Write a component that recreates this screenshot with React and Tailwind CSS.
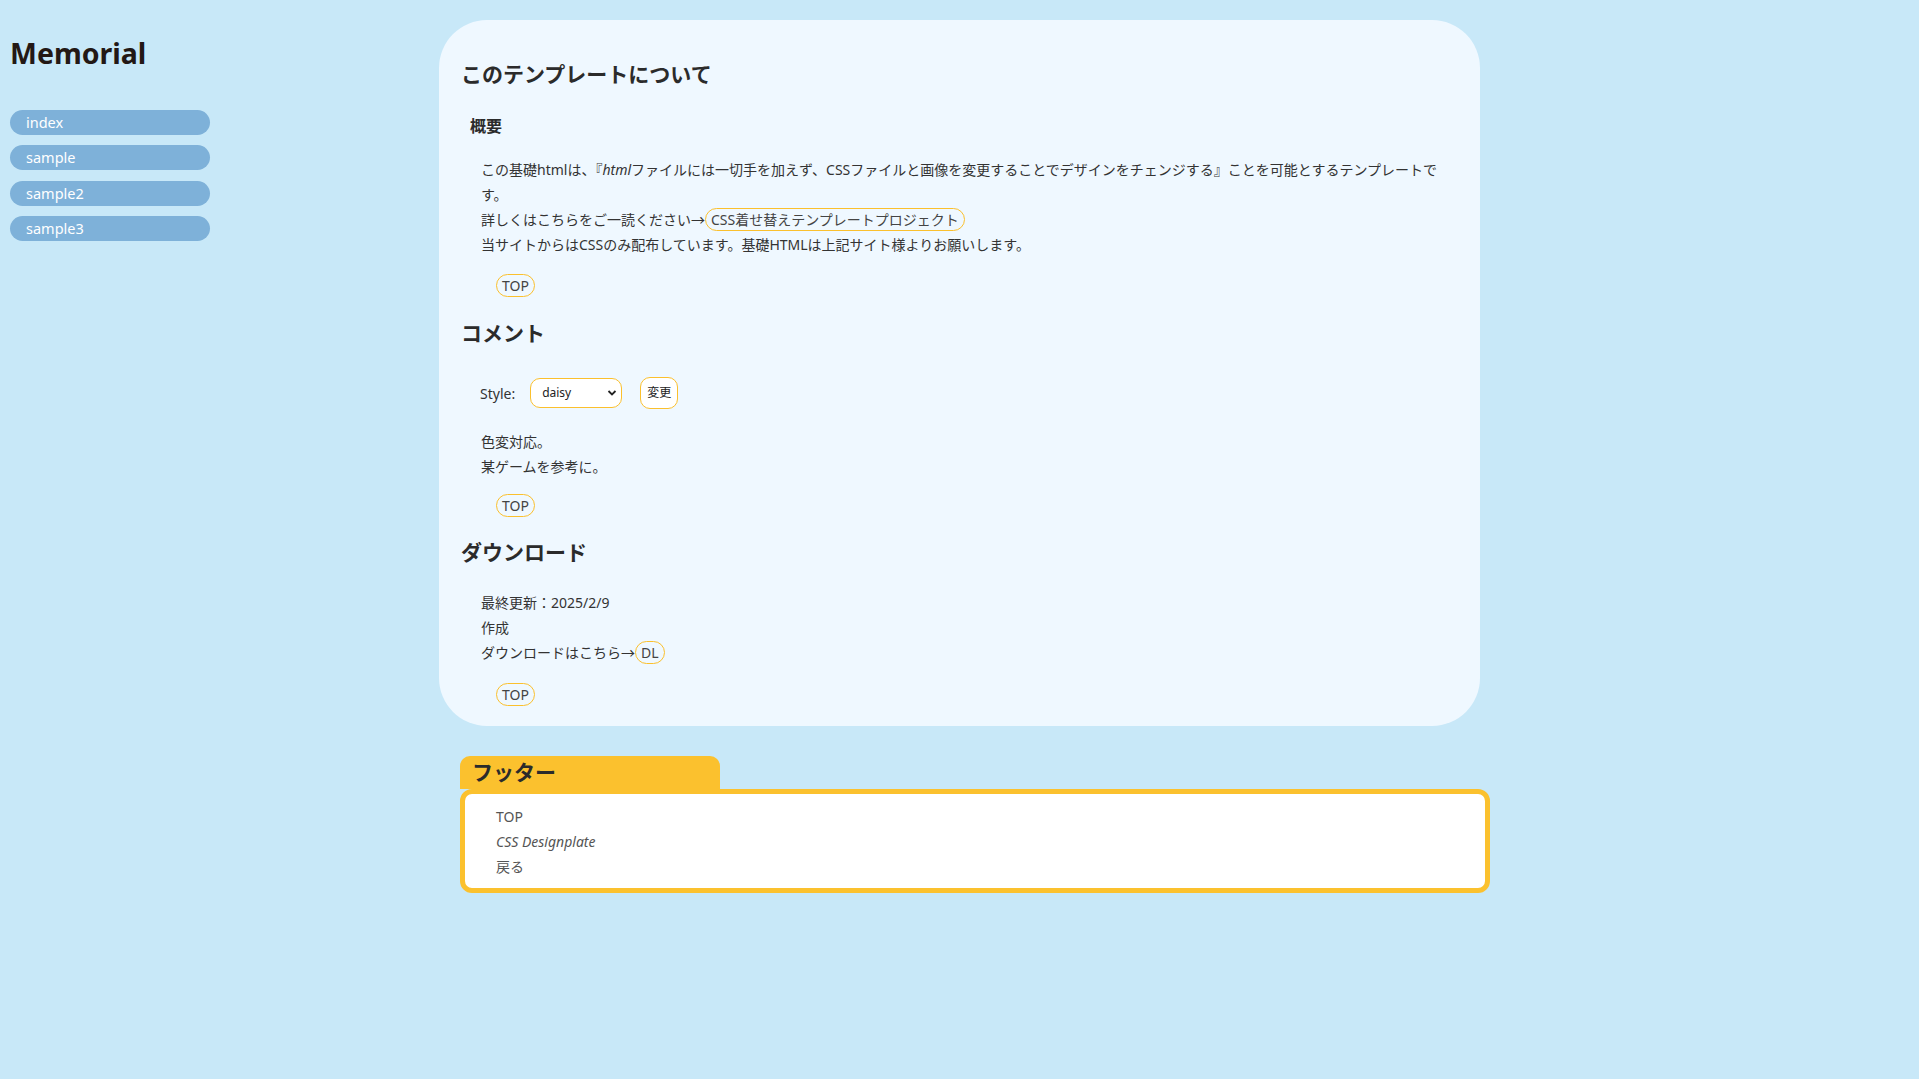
const font = { fontFamily: '"Noto Sans", "Noto Sans CJK JP", sans-serif' }

function Pill({ children, className = '' }) {
  return (
    <span className={`inline-block border border-[#fbc02d] rounded-full px-[5px] leading-[21px] text-[#444] ${className}`}>
      {children}
    </span>
  )
}

function TopLink({ className = '' }) {
  return (
    <div className={`pl-[35px] ${className}`}>
      <span className="inline-block border border-[#fbc02d] rounded-full px-[5px] leading-[21px] text-[14px] text-[#444]">TOP</span>
    </div>
  )
}

export default function App() {
  const nav = ['index', 'sample', 'sample2', 'sample3']

  return (
    <div className="min-h-screen w-full bg-[#c8e8f8] text-[#333]" style={font}>
      <div className="flex">
        <aside className="w-[439px] shrink-0 pl-[10px]">
          <h1 className="mt-[33px] text-[28.5px] leading-[40px] font-bold text-[#231815]">Memorial</h1>
          <ul className="mt-[37px] w-[200px] flex flex-col gap-[10.3px]">
            {nav.map((n) => (
              <li key={n} className="h-[25px] rounded-full bg-[#7eb1d9] pl-[16px] text-[14.5px] leading-[25px] text-white">
                {n}
              </li>
            ))}
          </ul>
        </aside>

        <main className="pt-[20px]">
          <section className="w-[1041px] rounded-[48px] bg-[#eff8ff] pt-[39px] pb-[20px] px-[22px]">
            <h2 className="text-[21px] leading-[30px] font-bold text-[#2b2b2b]">このテンプレートについて</h2>
            <h3 className="mt-[25px] ml-[9px] text-[16px] leading-[24px] font-bold text-[#2b2b2b]">概要</h3>
            <div className="mt-[19px] ml-[20px] text-[14px] leading-[25px]">
              <p>
                この基礎htmlは、『<i>html</i>ファイルには一切手を加えず、CSSファイルと画像を変更することでデザインをチェンジする』ことを可能とするテンプレートです。
              </p>
              <p>
                詳しくはこちらをご一読ください→<Pill>CSS着せ替えテンプレートプロジェクト</Pill>
              </p>
              <p>当サイトからはCSSのみ配布しています。基礎HTMLは上記サイト様よりお願いします。</p>
            </div>
            <TopLink className="mt-[16px]" />

            <h2 className="mt-[21px] text-[21px] leading-[30px] font-bold text-[#2b2b2b]">コメント</h2>
            <div className="mt-[29px] ml-[19px] flex items-center h-[32px] text-[14px]">
              <span className="text-[#333]">Style:</span>
              <div className="relative ml-[15px]">
                <select
                  defaultValue="daisy"
                  className="appearance-none w-[92px] h-[30px] rounded-[10px] border border-[#fbc02d] bg-white pl-[11px] text-[12px] text-[#222] outline-none"
                >
                  <option value="daisy">daisy</option>
                </select>
                <svg className="pointer-events-none absolute right-[5px] top-[11px]" width="10" height="8" viewBox="0 0 10 8">
                  <path d="M1.5 2 L5 5.5 L8.5 2" fill="none" stroke="#222" strokeWidth="1.8" />
                </svg>
              </div>
              <button className="ml-[18px] w-[38px] h-[32px] rounded-[10px] border border-[#fbc02d] bg-white text-[12px] text-[#222]">
                変更
              </button>
            </div>
            <div className="mt-[20px] ml-[20px] text-[14px] leading-[25px]">
              <p>色変対応。</p>
              <p>某ゲームを参考に。</p>
            </div>
            <TopLink className="mt-[14px]" />

            <h2 className="mt-[20px] text-[21px] leading-[30px] font-bold text-[#2b2b2b]">ダウンロード</h2>
            <div className="mt-[23px] ml-[20px] text-[14px] leading-[25px]">
              <p>最終更新：2025/2/9</p>
              <p>作成</p>
              <p>
                ダウンロードはこちら→<Pill>DL</Pill>
              </p>
            </div>
            <TopLink className="mt-[17px]" />
          </section>

          <footer className="mt-[30px] ml-[21px] w-[1030px]">
            <div className="w-[260px] h-[33px] rounded-t-[10px] bg-[#fbc12e] pl-[12px] text-[21px] leading-[33px] font-bold text-[#2b2b2b]">
              フッター
            </div>
            <div className="rounded-[12px] border-[5px] border-[#fbc12e] bg-white pl-[31px] py-[9.5px] text-[14px] leading-[25px] text-[#555]">
              <p>TOP</p>
              <p className="italic">CSS Designplate</p>
              <p>戻る</p>
            </div>
          </footer>
        </main>
      </div>
    </div>
  )
}
